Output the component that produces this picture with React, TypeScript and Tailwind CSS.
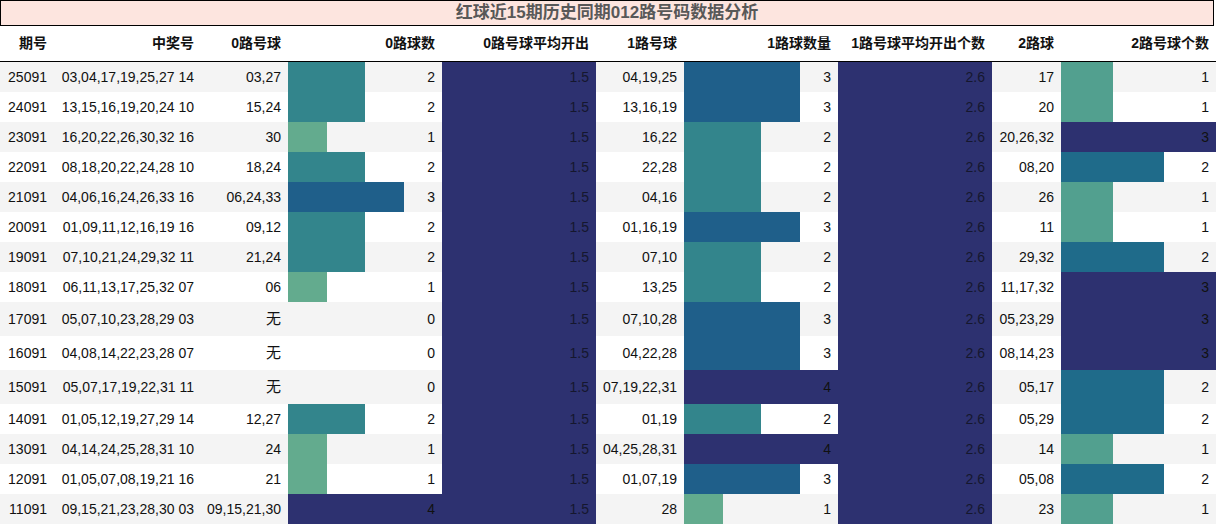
import React from "react";

type Row = {
  qh: string;
  zj: string;
  r0: string;
  c0: number;
  r1: string;
  c1: number;
  r2: string;
  c2: number;
};

const rows: Row[] = [
  { qh: "25091", zj: "03,04,17,19,25,27 14", r0: "03,27", c0: 2, r1: "04,19,25", c1: 3, r2: "17", c2: 1 },
  { qh: "24091", zj: "13,15,16,19,20,24 10", r0: "15,24", c0: 2, r1: "13,16,19", c1: 3, r2: "20", c2: 1 },
  { qh: "23091", zj: "16,20,22,26,30,32 16", r0: "30", c0: 1, r1: "16,22", c1: 2, r2: "20,26,32", c2: 3 },
  { qh: "22091", zj: "08,18,20,22,24,28 10", r0: "18,24", c0: 2, r1: "22,28", c1: 2, r2: "08,20", c2: 2 },
  { qh: "21091", zj: "04,06,16,24,26,33 16", r0: "06,24,33", c0: 3, r1: "04,16", c1: 2, r2: "26", c2: 1 },
  { qh: "20091", zj: "01,09,11,12,16,19 16", r0: "09,12", c0: 2, r1: "01,16,19", c1: 3, r2: "11", c2: 1 },
  { qh: "19091", zj: "07,10,21,24,29,32 11", r0: "21,24", c0: 2, r1: "07,10", c1: 2, r2: "29,32", c2: 2 },
  { qh: "18091", zj: "06,11,13,17,25,32 07", r0: "06", c0: 1, r1: "13,25", c1: 2, r2: "11,17,32", c2: 3 },
  { qh: "17091", zj: "05,07,10,23,28,29 03", r0: "无", c0: 0, r1: "07,10,28", c1: 3, r2: "05,23,29", c2: 3 },
  { qh: "16091", zj: "04,08,14,22,23,28 07", r0: "无", c0: 0, r1: "04,22,28", c1: 3, r2: "08,14,23", c2: 3 },
  { qh: "15091", zj: "05,07,17,19,22,31 11", r0: "无", c0: 0, r1: "07,19,22,31", c1: 4, r2: "05,17", c2: 2 },
  { qh: "14091", zj: "01,05,12,19,27,29 14", r0: "12,27", c0: 2, r1: "01,19", c1: 2, r2: "05,29", c2: 2 },
  { qh: "13091", zj: "04,14,24,25,28,31 10", r0: "24", c0: 1, r1: "04,25,28,31", c1: 4, r2: "14", c2: 1 },
  { qh: "12091", zj: "01,05,07,08,19,21 16", r0: "21", c0: 1, r1: "01,07,19", c1: 3, r2: "05,08", c2: 2 },
  { qh: "11091", zj: "09,15,21,23,28,30 03", r0: "09,15,21,30", c0: 4, r1: "28", c1: 1, r2: "23", c2: 1 },
];

const headers = [
  "期号",
  "中奖号",
  "0路号球",
  "0路球数",
  "0路号球平均开出",
  "1路号球",
  "1路球数量",
  "1路号球平均开出个数",
  "2路球",
  "2路号球个数",
];

const grid =
  "grid grid-cols-[54px_147px_87px_154px_154px_88px_154px_154px_69px_155px]";

// four-step colour scale, 0..4
const scale4: Record<number, string> = {
  1: "bg-[#63ab8e]",
  2: "bg-[#33858c]",
  3: "bg-[#1f5f8a]",
  4: "bg-[#2d3170]",
};
// three-step scale, 0..3
const scale3: Record<number, string> = {
  1: "bg-[#52a08f]",
  2: "bg-[#1f6b8a]",
  3: "bg-[#2d3170]",
};

const Cell = ({ children, className = "" }: { children: React.ReactNode; className?: string }) => (
  <div className={`flex items-center justify-end pr-[7px] whitespace-nowrap ${className}`}>{children}</div>
);

const BarCell = ({ value, max, colors }: { value: number; max: number; colors: Record<number, string> }) => (
  <div className="relative flex items-center justify-end pr-[7px]">
    {value > 0 && (
      <div
        className={`absolute left-0 top-0 bottom-0 ${colors[value]}`}
        style={{ width: `${(value / max) * 100}%` }}
      />
    )}
    <span className="relative">{value}</span>
  </div>
);

export default function App() {
  return (
    <div
      className="w-[1216px] h-[525px] bg-white text-[14px] text-[#111]"
      style={{ fontFamily: '"Liberation Sans", "Noto Sans CJK SC", sans-serif' }}
    >
      <div className="h-[26px] mr-[2px] border border-black bg-[#fde5df] flex items-center justify-center text-[17px] font-bold text-[#585858]">
        红球近15期历史同期012路号码数据分析
      </div>
      <div className={`${grid} h-[36px] border-b border-black font-bold`}>
        {headers.map((h) => (
          <Cell key={h}>{h}</Cell>
        ))}
      </div>
      {rows.map((r, i) => (
        <div
          key={r.qh}
          className={`${grid} ${r.r0 === "无" ? "h-[34px]" : "h-[30px]"} ${i % 2 === 0 ? "bg-[#f4f4f4]" : "bg-white"}`}
        >
          <Cell>{r.qh}</Cell>
          <Cell>{r.zj}</Cell>
          <Cell className={r.r0 === "无" ? "text-[15px]" : ""}>{r.r0}</Cell>
          <BarCell value={r.c0} max={4} colors={scale4} />
          <Cell className="bg-[#2d3170] text-[#15172e]">1.5</Cell>
          <Cell>{r.r1}</Cell>
          <BarCell value={r.c1} max={4} colors={scale4} />
          <Cell className="bg-[#2d3170] text-[#15172e]">2.6</Cell>
          <Cell>{r.r2}</Cell>
          <BarCell value={r.c2} max={3} colors={scale3} />
        </div>
      ))}
    </div>
  );
}
